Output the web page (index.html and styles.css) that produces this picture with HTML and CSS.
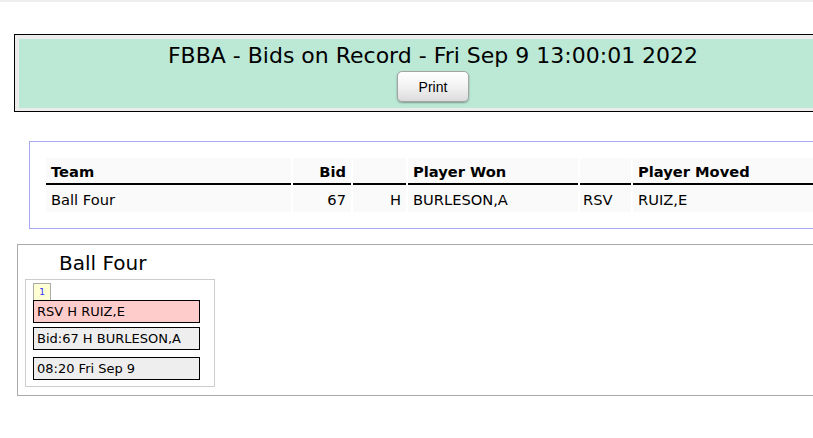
FILE: index.html
```html
<!DOCTYPE html>
<html>
<head>
<meta charset="utf-8">
<title>FBBA - Bids on Record</title>
<link rel="stylesheet" href="styles.css">
</head>
<body>
<div class="topline"></div>
<div class="banner">
  <div class="banner-inner">
    <div class="title">FBBA - Bids on Record - Fri Sep 9 13:00:01 2022</div>
    <button class="print" type="button">Print</button>
  </div>
</div>
<div class="bids">
  <div class="bid-grid">
    <div class="th">Team</div>
    <div class="th num">Bid</div>
    <div class="th"></div>
    <div class="th">Player Won</div>
    <div class="th"></div>
    <div class="th">Player Moved</div>
    <div class="td">Ball Four</div>
    <div class="td num">67</div>
    <div class="td num">H</div>
    <div class="td">BURLESON,A</div>
    <div class="td rsv">RSV</div>
    <div class="td">RUIZ,E</div>
  </div>
</div>
<div class="teams">
  <div class="team-name">Ball Four</div>
  <div class="team-card">
    <div class="tab">1</div>
    <div class="row moved">RSV H RUIZ,E</div>
    <div class="row bid">Bid:67 H BURLESON,A</div>
    <div class="row when">08:20 Fri Sep 9</div>
  </div>
</div>
</body>
</html>
```

FILE: styles.css
```css
* { box-sizing: border-box; }
html, body { margin: 0; padding: 0; }
body {
  font-family: "DejaVu Sans", Verdana, sans-serif;
  color: #000;
  background: #fff;
  overflow-x: hidden;
}
.topline { height: 2px; background: #eeeeee; }

.banner {
  margin: 32px 0 0 14px;
  border: 1px solid #000;
  border-right: none;
  padding: 4px 0 3px 4px;
  background: #ececec;
}
.banner-inner {
  background: #bbe9d6;
  text-align: center;
  padding: 4px 0 6px 34px;
}
.title { font-size: 22px; line-height: 25px; white-space: nowrap; }
.print {
  display: block;
  margin: 3px auto 0;
  width: 72px;
  height: 31px;
  padding: 0;
  border: 1px solid #a4a4a4;
  border-radius: 5px;
  background: linear-gradient(#ffffff, #f4f4f4 45%, #dcdcdc);
  box-shadow: 0 1px 2px rgba(0,0,0,0.35);
  font-family: "Liberation Sans", Arial, sans-serif;
  font-size: 14px;
  color: #000;
}

.bids {
  margin: 29px 0 0 29px;
  border: 1px solid #a8a8f4;
  border-right: none;
  padding: 16px 0 16px 16px;
}
.bid-grid {
  display: grid;
  grid-template-columns: 245px 58px 53px 170px 51px 1fr;
  column-gap: 2px;
  font-size: 14.67px;
  line-height: 17px;
}
.th {
  background: #fafafa;
  font-weight: bold;
  padding: 5px 5px 3px;
  border-bottom: 2px solid #000;
  white-space: nowrap;
}
.td {
  background: #fafafa;
  padding: 6px 5px 4px;
  white-space: nowrap;
}
.num { text-align: right; }
.rsv { padding-left: 3px; }

.teams {
  margin: 15px 0 0 17px;
  border: 1px solid #aaaaaa;
  border-right: none;
  padding: 7px 0 8px 7px;
}
.team-name {
  font-size: 20px;
  line-height: 23px;
  margin: 0 0 4px 34px;
}
.team-card {
  width: 190px;
  border: 1px solid #cccccc;
  padding: 3px 0 6px 7px;
}
.tab {
  width: 18px;
  height: 17px;
  border: 1px solid #aaaaaa;
  border-bottom: none;
  background: #ffffd4;
  color: #3333ff;
  font-size: 9px;
  line-height: 16px;
  text-align: center;
}
.row {
  width: 167px;
  height: 23px;
  border: 1px solid #000;
  padding: 2px 3px;
  font-size: 13px;
  line-height: 17px;
  background: #eeeeee;
  white-space: nowrap;
}
.moved { background: #ffcccc; }
.bid { margin-top: 4px; }
.when { margin-top: 7px; }
```
